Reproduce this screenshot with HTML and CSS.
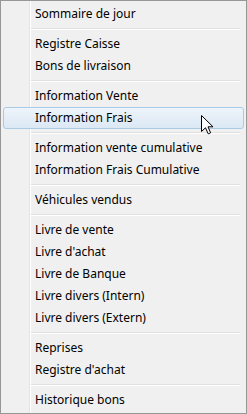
FILE: index.html
```html
<!DOCTYPE html>
<html lang="fr">
<head>
    <meta charset="UTF-8">
    <meta name="viewport" content="width=device-width, initial-scale=1.0">
    <title>Menu</title>
    <link rel="stylesheet" href="styles.css">
</head>
<body>
    <ul class="menu">
        <li class="item">Sommaire de jour</li>
        <li class="sep"></li>
        <li class="item">Registre Caisse</li>
        <li class="item">Bons de livraison</li>
        <li class="sep"></li>
        <li class="item">Information Vente</li>
        <li class="item hover">Information Frais
            <svg class="cursor" width="13" height="20" viewBox="0 0 13 20">
                <path d="M0.5 0.5 L0.5 16.5 L4.5 12.8 L7.2 18.8 L9.6 17.8 L7 11.8 L12 11.8 Z" fill="#fff" stroke="#000" stroke-width="1" stroke-linejoin="miter"/>
            </svg>
        </li>
        <li class="sep"></li>
        <li class="item">Information vente cumulative</li>
        <li class="item">Information Frais Cumulative</li>
        <li class="sep"></li>
        <li class="item">Véhicules vendus</li>
        <li class="sep"></li>
        <li class="item">Livre de vente</li>
        <li class="item">Livre d'achat</li>
        <li class="item">Livre de Banque</li>
        <li class="item">Livre divers (Intern)</li>
        <li class="item">Livre divers (Extern)</li>
        <li class="sep"></li>
        <li class="item">Reprises</li>
        <li class="item">Registre d'achat</li>
        <li class="sep"></li>
        <li class="item">Historique bons</li>
    </ul>
</body>
</html>
```

FILE: styles.css
```css
body {
    margin: 0;
    padding: 0;
    background: #f0f0f0;
    font-family: "Noto Sans", "Open Sans", sans-serif;
    font-size: 12px;
    color: #000;
}
.menu {
    list-style: none;
    margin: 0;
    padding: 2px;
    width: 247px;
    height: 414px;
    box-sizing: border-box;
    border: 1px solid #979797;
    background-color: #f0f0f0;
    background-image: linear-gradient(to right, transparent 28px, #e2e3e3 28px, #e2e3e3 29px, #fff 29px, #fff 30px, transparent 30px);
    display: flex;
    flex-direction: column;
}
.item {
    position: relative;
    height: 22px;
    line-height: 22px;
    padding-left: 32px;
    white-space: nowrap;
}
.item.hover {
    height: 20px;
    line-height: 20px;
    padding-left: 31px;
    border: 1px solid #a9cbe3;
    border-radius: 3px;
    background: linear-gradient(to bottom, #eef4fa, #dbe8f4);
}
.sep {
    height: 8px;
    margin: 0 4px 0 28px;
    background: linear-gradient(to bottom, transparent 3px, #e0e0e0 3px, #e0e0e0 4px, #fff 4px, #fff 5px, transparent 5px);
}
.cursor {
    position: absolute;
    left: 197px;
    top: 7px;
}
```
